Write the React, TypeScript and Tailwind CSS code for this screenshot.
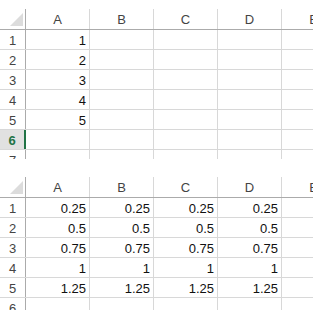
import React from "react";

const cols = ["A", "B", "C", "D", "E"];

const Corner = () => (
  <svg width="26" height="20" viewBox="0 0 26 20" className="block">
    <polygon points="23,4 23,17 10,17" fill="#dcdcdc" />
  </svg>
);

function Header() {
  return (
    <div className="flex h-[21px] border-b border-[#ababab] shrink-0">
      <div className="w-[26px] shrink-0 border-r border-[#ababab]">
        <Corner />
      </div>
      {cols.map((c) => (
        <div
          key={c}
          className="w-[64px] shrink-0 border-r border-[#d8d8d8] flex items-center justify-center text-[#444] pt-[1px]"
        >
          {c}
        </div>
      ))}
    </div>
  );
}

function Row({ n, values, selected }: { n: number; values: string[]; selected?: boolean }) {
  return (
    <div className="flex h-[20px] border-b border-[#d8d8d8] shrink-0">
      <div
        className={`w-[26px] shrink-0 flex items-center justify-center pt-[1px] ${
          selected
            ? "bg-[#e1e1e1] text-[#217346] font-bold border-r-2 border-[#217346]"
            : "text-[#444] border-r border-[#ababab]"
        }`}
      >
        {n}
      </div>
      {cols.map((c, i) => (
        <div
          key={c}
          className="w-[64px] shrink-0 border-r border-[#d8d8d8] flex items-center justify-end pr-[3px] pt-[1px] text-[#111]"
        >
          {values[i] ?? ""}
        </div>
      ))}
    </div>
  );
}

export default function App() {
  const top = [["1"], ["2"], ["3"], ["4"], ["5"], [], []];
  const dec = ["0.25", "0.5", "0.75", "1", "1.25"];
  const bottom = [...dec.map((v) => [v, v, v, v]), []];

  return (
    <div
      className="w-[313px] h-[315px] bg-white overflow-hidden text-[13px] leading-none"
      style={{ fontFamily: '"Liberation Sans", Arial, sans-serif' }}
    >
      <div className="pt-[9px] h-[159px] overflow-hidden flex flex-col">
        <Header />
        {top.map((v, i) => (
          <Row key={i} n={i + 1} values={v} selected={i === 5} />
        ))}
      </div>
      <div className="mt-[18px] h-[133px] overflow-hidden flex flex-col">
        <Header />
        {bottom.map((v, i) => (
          <Row key={i} n={i + 1} values={v} />
        ))}
      </div>
    </div>
  );
}
